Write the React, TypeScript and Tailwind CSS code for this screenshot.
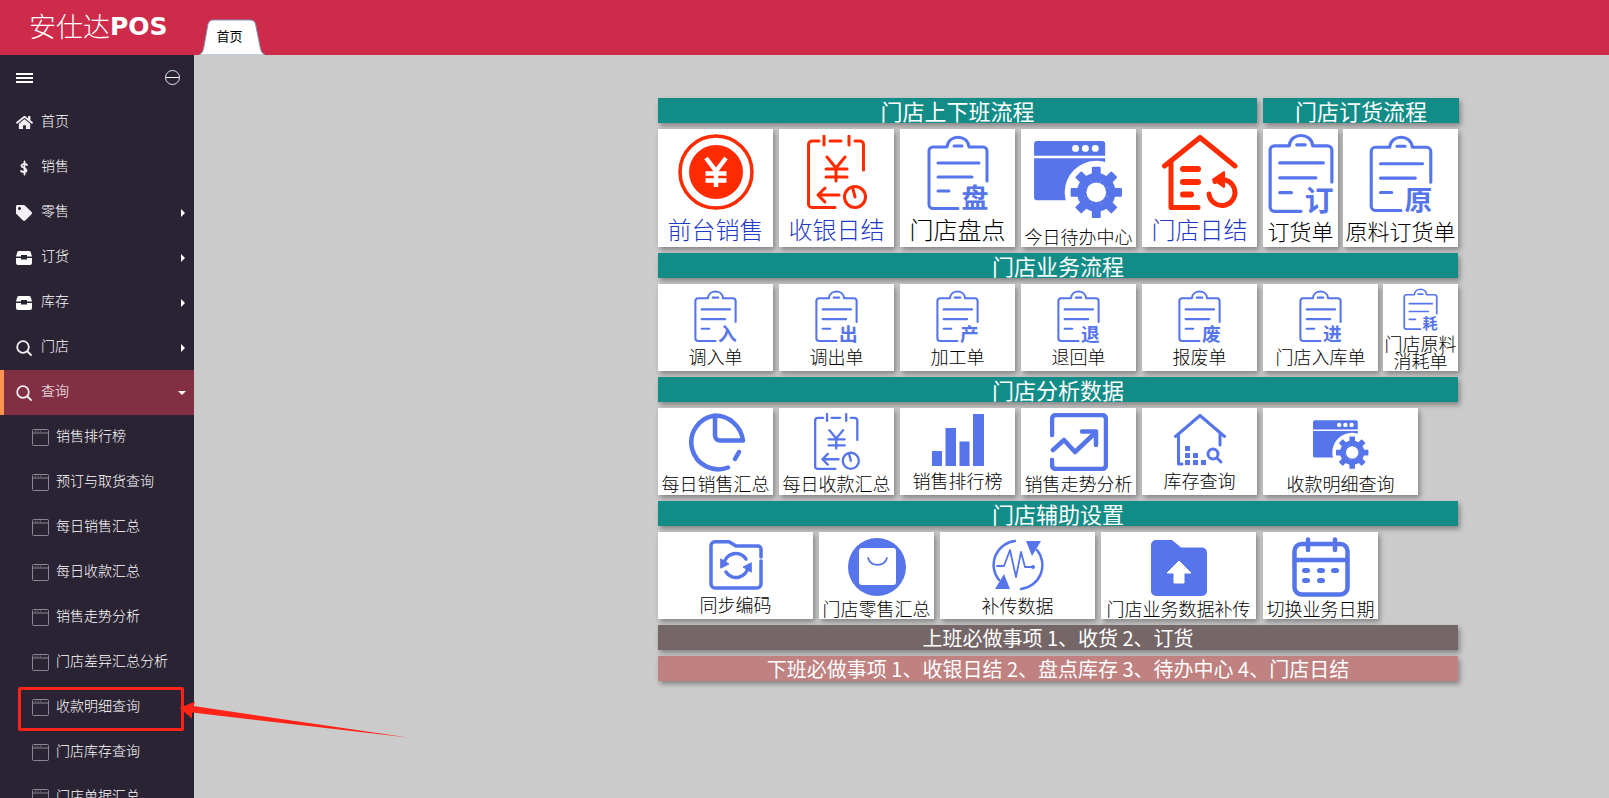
import React from "react";
import { FaHome, FaTag } from "react-icons/fa";

const BLUE = "#5775eb";
const RED = "#ff2b00";
const FONT = '"Noto Sans CJK SC", "Noto Sans", sans-serif';

// ---- icons ----
const Clipboard = ({ w, h, ch, color = BLUE }: { w: number; h: number; ch: string; color?: string }) => (
  <svg className="overflow-visible" width={w} height={h} viewBox="0 0 62 75" fill="none" stroke={color} strokeWidth="3" strokeLinecap="round" strokeLinejoin="round">
    <path d="M31 73.500H6a4 4 0 0 1-4-4V16a4 4 0 0 1 4-4H20C21 -1 41 -1 42 12H56a4 4 0 0 1 4 4V46" />
    <path d="M27 11H35M11 28H52M11 42H45M11 56H22" />
    <text x="48" y="73" textAnchor="middle" fontSize="27" fontWeight="700" fill={color} stroke="none" fontFamily={FONT}>
      {ch}
    </text>
  </svg>
);

const YenCoin = () => (
  <svg width="76" height="76" viewBox="0 0 76 76">
    <circle cx="38" cy="38" r="36" fill="none" stroke={RED} strokeWidth="3.500" />
    <circle cx="38" cy="38" r="27" fill={RED} />
    <path d="M28 24L38 37L48 24M27.500 39.500H48.500M27.500 46.500H48.500M38 37V53" fill="none" stroke="#fff" strokeWidth="4.500" />
  </svg>
);

const ReceiptClock = ({ w, h, color }: { w: number; h: number; color: string }) => (
  <svg width={w} height={h} viewBox="0 0 60 75" fill="none" stroke={color} strokeWidth="3" strokeLinecap="round" strokeLinejoin="round">
    <path d="M12 6H5a3.500 3.500 0 0 0-3.500 3.500V69a3.500 3.500 0 0 0 3.500 3.500H28" />
    <path d="M17 1V10M42 1V10M23 6H34M48 6H53a3.500 3.500 0 0 1 3.500 3.500V35" />
    <path d="M20 22L29 33L38 22M19 34H40M19 42H40M29 33V46" />
    <path d="M32 60H11M18 53L11 60L18 67" />
    <circle cx="48" cy="62" r="10.500" />
    <path d="M48 62L46 54" />
  </svg>
);

const GearWindow = ({ w, h }: { w: number; h: number }) => {
  const teeth = [0, 45, 90, 135];
  return (
    <svg width={w} height={h} viewBox="0 0 90 78">
      <path d="M3 0H69a3 3 0 0 1 3 3V15H0V3a3 3 0 0 1 3-3Z" fill={BLUE} />
      <circle cx="42" cy="7.500" r="3.500" fill="#fff" />
      <circle cx="52" cy="7.500" r="3.500" fill="#fff" />
      <circle cx="62" cy="7.500" r="3.500" fill="#fff" />
      <path d="M0 17.500H72V60H3a3 3 0 0 1-3-3Z" fill={BLUE} />
      <circle cx="63" cy="52" r="32" fill="#fff" />
      <rect x="73" y="20" width="17" height="40" fill="#fff" />
      {teeth.map((a) => (
        <rect key={a} x="58.500" y="26" width="9" height="52" rx="1" fill={BLUE} transform={`rotate(${a} 63 52)`} />
      ))}
      <circle cx="63" cy="52" r="16" fill="none" stroke={BLUE} strokeWidth="7" />
      <circle cx="63" cy="52" r="10" fill="#fff" />
    </svg>
  );
};

const HomeList = () => (
  <svg width="76" height="76" viewBox="0 0 76 76" fill="none" stroke={RED} strokeWidth="5" strokeLinecap="round" strokeLinejoin="round">
    <path d="M2.500 31L38 2.500L73 31" />
    <path d="M9 26V72.500H36" />
    <path d="M21 34H36M21 47H36M21 59.500H29" strokeWidth="6" />
    <path d="M53 46.500A13 13 0 1 1 47 59" />
    <path d="M62 37V52L51 44.500Z" fill={RED} strokeWidth="2" />
  </svg>
);

const PieIcon = () => (
  <svg width="60" height="60" viewBox="0 0 60 60" fill="none" stroke={BLUE} strokeWidth="4.500" strokeLinecap="round" strokeLinejoin="round">
    <path d="M42 54.500A27 27 0 1 1 29 2.500C43 2.500 55 13 57 27.500H34a5 5 0 0 1-5-5V2.500" />
    <path d="M53 39L49 46" />
  </svg>
);

const BarsIcon = () => (
  <svg width="52" height="52" viewBox="0 0 52 52" fill={BLUE}>
    <rect x="0" y="37" width="10" height="15" />
    <rect x="13.500" y="14" width="10.500" height="38" />
    <rect x="27.500" y="27.500" width="10" height="24.500" />
    <rect x="41" y="0" width="11" height="52" />
  </svg>
);

const TrendIcon = () => (
  <svg width="58" height="58" viewBox="0 0 58 58" fill="none" stroke={BLUE} strokeWidth="4.500" strokeLinecap="round" strokeLinejoin="round">
    <path d="M2 22V6a4 4 0 0 1 4-4H52a4 4 0 0 1 4 4V52a4 4 0 0 1-4 4H6a4 4 0 0 1-4-4V47" />
    <path d="M3 37L14 27L25 39L45 20" />
    <path d="M32 18.500H46V32" />
  </svg>
);

const HouseSearch = () => (
  <svg width="52" height="52" viewBox="0 0 52 52" fill="none" stroke={BLUE} strokeWidth="3" strokeLinecap="round" strokeLinejoin="round">
    <path d="M1.500 22.500L26 1.500L50.500 22.500" />
    <path d="M4.500 20V50H8M46 20V31" />
    <g fill={BLUE} stroke="none">
      <rect x="11" y="32" width="5" height="5" />
      <rect x="11" y="39" width="5" height="5" />
      <rect x="19" y="39" width="5" height="5" />
      <rect x="11" y="46" width="5" height="5" />
      <rect x="19" y="46" width="5" height="5" />
      <rect x="27" y="46" width="5" height="5" />
    </g>
    <circle cx="39" cy="40" r="5" />
    <path d="M43 44L47 48" />
  </svg>
);

const FolderSync = () => (
  <svg width="54" height="50" viewBox="0 0 54 50" fill="none" stroke={BLUE} strokeWidth="3.500" strokeLinecap="round" strokeLinejoin="round">
    <path d="M52 17V9a3 3 0 0 0-3-3H27L20 1.800H6A4 4 0 0 0 2 6V44a4 4 0 0 0 4 4H48a4 4 0 0 0 4-4V21" />
    <path d="M15 24A12 12 0 0 1 37 19M39 27A12 12 0 0 1 17 32" strokeWidth="3.500" />
    <path d="M12 19L20 24L12 28ZM42 32L34 27L42 23Z" fill={BLUE} strokeWidth="1" />
  </svg>
);

const BagIcon = () => (
  <svg width="58" height="58" viewBox="0 0 58 58">
    <circle cx="29" cy="29" r="29" fill={BLUE} />
    <rect x="11" y="10" width="37" height="37" rx="3" fill="#fff" />
    <path d="M20 20A10 10 0 0 0 39 20" fill="none" stroke={BLUE} strokeWidth="1.800" strokeLinecap="round" />
  </svg>
);

const PulseSync = () => (
  <svg width="52" height="52" viewBox="0 0 52 52" fill="none" stroke={BLUE} strokeWidth="2.500" strokeLinecap="round" strokeLinejoin="round">
    <path d="M23 2A24 24 0 0 0 7 41M29 50A24 24 0 0 0 45 11" />
    <path d="M3 50H18L12 35ZM49 2H34L40 17Z" fill={BLUE} stroke="none" />
    <path d="M5 27H12L18 11L24 38L29 13L33 28L41 28" strokeWidth="1.800" />
    <circle cx="41" cy="28" r="2" fill={BLUE} stroke="none" />
  </svg>
);

const FolderUp = () => (
  <svg width="56" height="56" viewBox="0 0 56 56">
    <path d="M5 0H21L30 7.500H51a5 5 0 0 1 5 5V51a5 5 0 0 1-5 5H5a5 5 0 0 1-5-5V5a5 5 0 0 1 5-5Z" fill={BLUE} />
    <path d="M28 21L40 33H33V43H23V33H16Z" fill="#fff" stroke="#fff" strokeLinejoin="round" />
  </svg>
);

const CalendarIcon = () => (
  <svg width="58" height="60" viewBox="0 0 58 60" fill="none" stroke={BLUE} strokeWidth="4.500" strokeLinecap="round">
    <rect x="2.500" y="7" width="53" height="50.500" rx="7" />
    <path d="M2.500 23H55.500M16 2.500V13M43 2.500V13" />
    <g fill={BLUE} stroke="none">
      <rect x="10" y="31" width="8" height="5" rx="2.500" />
      <rect x="25" y="31" width="8" height="5" rx="2.500" />
      <rect x="39" y="31" width="8" height="5" rx="2.500" />
      <rect x="10" y="41" width="8" height="5" rx="2.500" />
      <rect x="25" y="41" width="8" height="5" rx="2.500" />
    </g>
  </svg>
);

const BoxIcon = () => (
  <svg width="16" height="14" viewBox="0 0 16 14" fill="#fff">
    <path d="M3 0H13a2 2 0 0 1 2 2L16 5.500H11V4H5V5.500H0L1 2a2 2 0 0 1 2-2Z" />
    <path d="M0 7H5V8.500H11V7H16V12a2 2 0 0 1-2 2H2a2 2 0 0 1-2-2Z" />
  </svg>
);

const SearchIcon = () => (
  <svg width="16" height="16" viewBox="0 0 16 16" fill="none" stroke="#f2f0f4" strokeWidth="1.800" strokeLinecap="round">
    <circle cx="7" cy="7" r="5.800" />
    <path d="M11.500 11.500L15 15" />
  </svg>
);

const DollarIcon = () => (
  <svg width="16" height="16" viewBox="0 0 16 16" fill="none" stroke="#f2f0f4" strokeWidth="1.800" strokeLinecap="round">
    <path d="M11 5C10 3.500 6 3.500 5.500 5.500C5 8 10.500 7.500 10.500 10.500C10.500 12.500 6.500 12.500 5 11M8.500 1.500V14.500" />
  </svg>
);

const WindowIcon = () => (
  <svg width="17" height="17" viewBox="0 0 17 17" fill="none" stroke="#8b8791" strokeWidth="1">
    <rect x="0.500" y="0.500" width="16" height="16" rx="1" />
    <path d="M0.500 4H16.500M3 2.200H4M5.500 2.200H6.500M8 2.200H9" />
  </svg>
);

// ---- sidebar ----
const Caret = () => (
  <span className="ml-auto mr-[9px] w-0 h-0 border-y-[4px] border-y-transparent border-l-[4px] border-l-white" />
);

const topMenu = [
  { label: "首页", icon: <FaHome size={17} color="#f2f0f4" /> },
  { label: "销售", icon: <DollarIcon /> },
  { label: "零售", icon: <FaTag size={16} color="#f2f0f4" />, caret: true },
  { label: "订货", icon: <BoxIcon />, caret: true },
  { label: "库存", icon: <BoxIcon />, caret: true },
  { label: "门店", icon: <SearchIcon />, caret: true },
];

const subMenu = ["销售排行榜", "预订与取货查询", "每日销售汇总", "每日收款汇总", "销售走势分析", "门店差异汇总分析", "收款明细查询", "门店库存查询", "门店单据汇总"];

const Sidebar = () => (
  <aside className="w-[194px] shrink-0 bg-[#2a2333] text-white text-[14px] font-light overflow-hidden">
    <div className="h-[45px] flex items-center pl-4">
      <div className="w-[17px] flex flex-col gap-[2px]">
        <div className="h-[2px] bg-white" />
        <div className="h-[2px] bg-white" />
        <div className="h-[2px] bg-white" />
      </div>
      <div className="ml-auto mr-[14px] w-[15px] h-[15px] rounded-full border border-[#dfe9f5] flex items-center">
        <div className="w-full h-px bg-white" />
      </div>
    </div>
    {topMenu.map((m) => (
      <div key={m.label} className="h-[45px] flex items-center pl-4">
        <span className="w-[25px] flex items-center">{m.icon}</span>
        <span className="mb-[4px]">{m.label}</span>
        {m.caret && <Caret />}
      </div>
    ))}
    <div className="h-[45px] flex items-center pl-3 border-l-4 border-[#ff9350] bg-[#822f43]">
      <span className="w-[25px] flex items-center">
        <SearchIcon />
      </span>
      <span className="mb-[4px]">查询</span>
      <span className="ml-auto mr-2 w-0 h-0 border-x-[4px] border-x-transparent border-t-[4px] border-t-white" />
    </div>
    {subMenu.map((s) => (
      <div key={s} className="h-[45px] flex items-center pl-8 gap-[7px]">
        <WindowIcon />
        <span className="mb-[4px]">{s}</span>
      </div>
    ))}
  </aside>
);

// ---- board ----
const Bar = ({ children, className }: { children: React.ReactNode; className: string }) => (
  <div className={`h-[25px] flex items-center justify-center text-white shadow-[2px_3px_5px_rgba(0,0,0,0.35)] ${className}`}>{children}</div>
);

const Tile = ({ className, label, labelClass, icon }: { className: string; label: React.ReactNode; labelClass: string; icon: React.ReactNode }) => (
  <div className={`bg-white shrink-0 flex flex-col items-center font-light shadow-[2px_3px_5px_rgba(0,0,0,0.35)] ${className}`}>
    {icon}
    <div className={`mt-auto text-center whitespace-nowrap ${labelClass}`}>{label}</div>
  </div>
);

const Board = () => (
  <div className="w-[801px] flex flex-col">
    <div className="flex gap-[6px]">
      <Bar className="w-[599px] text-[22px] bg-[#128c87]">门店上下班流程</Bar>
      <Bar className="w-[196px] text-[22px] bg-[#128c87]">门店订货流程</Bar>
    </div>

    <div className="flex gap-[6px] mt-[6px] h-[118px]">
      <Tile className="w-[115px] pt-[5px]" icon={<YenCoin />} label="前台销售" labelClass="text-[24px] leading-[24px] pb-[6px] text-[#1f3ac6]" />
      <Tile className="w-[115px] pt-[6px]" icon={<ReceiptClock w={60} h={75} color={RED} />} label="收银日结" labelClass="text-[24px] leading-[24px] pb-[6px] text-[#1f3ac6]" />
      <Tile className="w-[115px] pt-[6px]" icon={<Clipboard w={62} h={75} ch="盘" />} label="门店盘点" labelClass="text-[24px] leading-[24px] pb-[6px] text-black" />
      <Tile className="w-[115px] pt-[12px]" icon={<GearWindow w={89} h={77} />} label="今日待办中心" labelClass="text-[18px] leading-[18px] pb-[2px] text-black" />
      <Tile className="w-[115px] pt-[6px]" icon={<HomeList />} label="门店日结" labelClass="text-[24px] leading-[24px] pb-[6px] text-[#1f3ac6]" />
      <Tile className="w-[75px] pt-[4px]" icon={<Clipboard w={66} h={80} ch="订" />} label="订货单" labelClass="text-[22px] leading-[22px] pb-[6px] text-black" />
      <Tile className="w-[115px] -ml-px pt-[6px]" icon={<Clipboard w={64} h={77} ch="原" />} label="原料订货单" labelClass="text-[22px] leading-[22px] pb-[6px] text-black" />
    </div>

    <Bar className="w-[800px] mt-[6px] text-[22px] bg-[#128c87]">门店业务流程</Bar>
    <div className="flex gap-[6px] mt-[6px] h-[87px]">
      {[
        { ch: "入", l: "调入单" },
        { ch: "出", l: "调出单" },
        { ch: "产", l: "加工单" },
        { ch: "退", l: "退回单" },
        { ch: "废", l: "报废单" },
        { ch: "进", l: "门店入库单" },
      ].map((t) => (
        <Tile key={t.ch} className="w-[115px] pt-[6px]" icon={<Clipboard w={43} h={52} ch={t.ch} />} label={t.l} labelClass="text-[18px] leading-[18px] pb-[6px] text-black" />
      ))}
      <Tile
        className="w-[75px] -ml-px pt-[4px]"
        icon={<Clipboard w={35} h={42} ch="耗" />}
        label={
          <>
            门店原料
            <br />
            消耗单
          </>
        }
        labelClass="text-[18px] leading-[17px] pb-[2px] text-black"
      />
    </div>

    <Bar className="w-[800px] mt-[6px] text-[22px] bg-[#128c87]">门店分析数据</Bar>
    <div className="flex gap-[6px] mt-[6px] h-[87px]">
      <Tile className="w-[115px] pt-[5px]" icon={<PieIcon />} label="每日销售汇总" labelClass="text-[18px] leading-[18px] pb-[3px] text-black" />
      <Tile className="w-[115px] pt-[5px]" icon={<ReceiptClock w={46} h={58} color={BLUE} />} label="每日收款汇总" labelClass="text-[18px] leading-[18px] pb-[3px] text-black" />
      <Tile className="w-[115px] pt-[6px]" icon={<BarsIcon />} label="销售排行榜" labelClass="text-[18px] leading-[18px] pb-[6px] text-black" />
      <Tile className="w-[115px] pt-[5px]" icon={<TrendIcon />} label="销售走势分析" labelClass="text-[18px] leading-[18px] pb-[3px] text-black" />
      <Tile className="w-[115px] pt-[6px]" icon={<HouseSearch />} label="库存查询" labelClass="text-[18px] leading-[18px] pb-[6px] text-black" />
      <Tile className="w-[155px] pt-[12px]" icon={<GearWindow w={56} h={49} />} label="收款明细查询" labelClass="text-[18px] leading-[18px] pb-[3px] text-black" />
    </div>

    <Bar className="w-[800px] mt-[6px] text-[22px] bg-[#128c87]">门店辅助设置</Bar>
    <div className="flex gap-[6px] mt-[6px] h-[87px]">
      <Tile className="w-[155px] pt-[8px]" icon={<FolderSync />} label="同步编码" labelClass="text-[18px] leading-[18px] pb-[6px] text-black" />
      <Tile className="w-[115px] pt-[6px]" icon={<BagIcon />} label="门店零售汇总" labelClass="text-[18px] leading-[18px] pb-[2px] text-black" />
      <Tile className="w-[155px] pt-[7px]" icon={<PulseSync />} label="补传数据" labelClass="text-[18px] leading-[18px] pb-[5px] text-black" />
      <Tile className="w-[155px] pt-[8px]" icon={<FolderUp />} label="门店业务数据补传" labelClass="text-[18px] leading-[18px] pb-[2px] text-black" />
      <Tile className="w-[115px] ml-px pt-[5px]" icon={<CalendarIcon />} label="切换业务日期" labelClass="text-[18px] leading-[18px] pb-[2px] text-black" />
    </div>

    <Bar className="w-[800px] mt-[6px] text-[20px] bg-[#756767]">上班必做事项 1、收货 2、订货</Bar>
    <Bar className="w-[800px] mt-[6px] text-[20px] bg-[#c08181]">下班必做事项 1、收银日结 2、盘点库存 3、待办中心 4、门店日结</Bar>
  </div>
);

export default function App() {
  return (
    <div className="relative h-screen overflow-hidden flex flex-col bg-[#cbcbcb]" style={{ fontFamily: FONT }}>
      <header className="h-[55px] shrink-0 bg-[#ce2a4a] flex items-end text-white">
        <div className="w-[199px] h-full flex items-center pl-[29px] pb-[2px]">
          <span className="text-[27px] font-light">安仕达</span>
          <span className="text-[25px] font-bold" style={{ fontFamily: '"DejaVu Sans", sans-serif' }}>
            POS
          </span>
        </div>
        <div className="relative w-[66px] h-[36px] flex items-center justify-center pr-[5px] pb-[3px] text-[13px] text-black">
          <svg className="absolute inset-0" width="66" height="36" viewBox="0 0 66 36">
            <path d="M0 36C3 34 3.500 33 4.500 30L9 5C10 2 12 1 14 1H51C54 1 55.500 2 56.500 5L61.500 30C62.500 33 63 34 66 36Z" fill="#fff" stroke="#7f94b4" />
          </svg>
          <span className="relative">首页</span>
        </div>
      </header>
      <div className="flex-1 flex min-h-0">
        <Sidebar />
        <main className="flex-1 pl-[464px] pt-[43px]">
          <Board />
        </main>
      </div>
      {/* annotation drawn over the page */}
      <div className="absolute left-[18px] top-[687px] w-[166px] h-[44px] border-[3px] border-[#ff2318] rounded-[2px]" />
      <svg className="absolute left-0 top-0" width="420" height="798" viewBox="0 0 420 798">
        <polygon points="179.500,708 195,701.500 193.500,706 408,737.500 192,712.500 192,718.500" fill="#ff2318" />
      </svg>
    </div>
  );
}
